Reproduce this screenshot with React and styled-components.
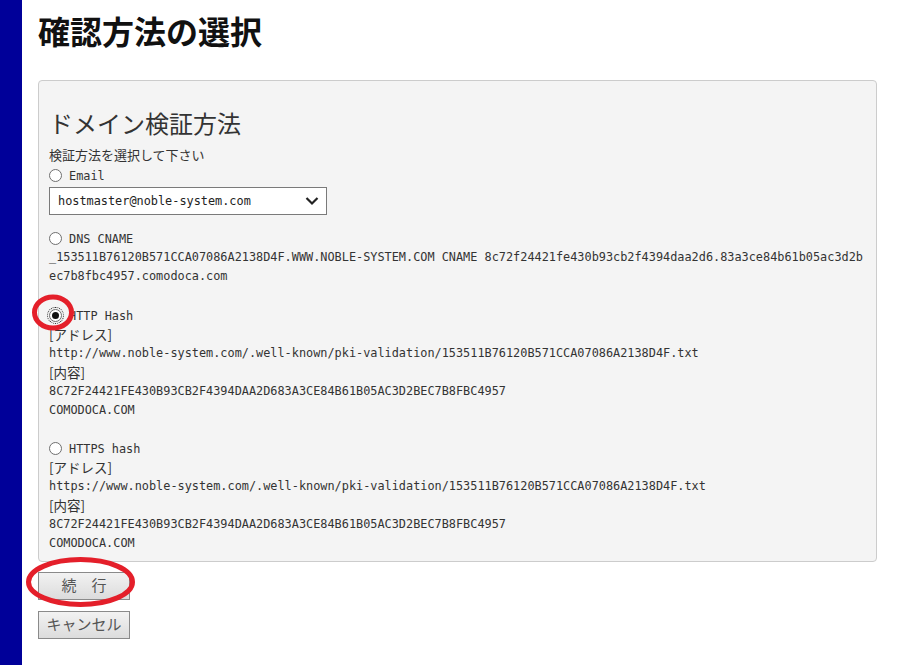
import React from "react";
import styled, { createGlobalStyle } from "styled-components";

const Global = createGlobalStyle`
  html, body { margin: 0; padding: 0; background: #fff; }
  body { font-family: "Noto Sans CJK JP", "Noto Sans", sans-serif; color: #333; }
`;

const Page = styled.div`
  position: relative;
  display: flex;
  min-height: 665px;
  width: 900px;
`;

const SideBar = styled.div`
  width: 22px;
  background: #000099;
  flex: none;
`;

const Main = styled.main`
  flex: 1;
  padding: 0 23px 20px 16px;
`;

const Title = styled.h1`
  margin: 10px 0 0;
  font-size: 32px;
  line-height: 40px;
  font-weight: 700;
  color: #111;
  font-family: "Noto Sans CJK JP", sans-serif;
`;

const Panel = styled.section`
  margin-top: 30px;
  background: #f4f4f4;
  border: 1px solid #cccccc;
  border-radius: 4px;
  padding: 16px 10px 8px;
`;

const Heading = styled.h2`
  margin: 10px 0 6px;
  font-size: 24px;
  line-height: 32px;
  font-weight: 400;
  color: #333;
  font-family: "Noto Sans CJK JP", sans-serif;
`;

const Lead = styled.div`
  font-size: 13px;
  line-height: 19px;
  color: #333;
`;

const Group = styled.div`
  margin-top: ${(p) => p.$gap || 0}px;
`;

const Mono = styled.div`
  font-family: "DejaVu Sans Mono", "Noto Sans CJK JP", monospace;
  font-size: 11.86px;
  line-height: 19px;
  height: 19px;
  color: #333;
  word-break: break-all;
`;

const MonoBlock = styled(Mono)`
  height: auto;
`;

const Jp = styled.span`
  font-family: "Noto Sans CJK JP", sans-serif;
  font-size: 13.5px;
  font-weight: 400;
  color: #333;
  line-height: 19px;
`;

const RadioRow = styled.label`
  display: flex;
  align-items: center;
  gap: 7px;
  height: 19px;
  margin-top: ${(p) => p.$top || 0}px;
  font-family: "DejaVu Sans Mono", monospace;
  font-size: 11.86px;
  color: #333;
`;

const Radio = styled.span`
  box-sizing: border-box;
  width: 13px;
  height: 13px;
  border-radius: 50%;
  border: 1px solid #6f6f6f;
  background: #fff;
  position: relative;
  flex: none;
  outline: ${(p) => (p.$checked ? "1px dotted #222" : "none")};
  outline-offset: 1px;
  &::after {
    content: "";
    display: ${(p) => (p.$checked ? "block" : "none")};
    position: absolute;
    left: 2px;
    top: 2px;
    width: 7px;
    height: 7px;
    border-radius: 50%;
    background: #111;
  }
`;

const Select = styled.div`
  box-sizing: border-box;
  margin-top: 2px;
  width: 278px;
  height: 28px;
  border: 1px solid #7a7a7a;
  background: #fff;
  display: flex;
  align-items: center;
  justify-content: space-between;
  padding: 0 7px 0 8px;
  font-family: "DejaVu Sans Mono", monospace;
  font-size: 11.86px;
  color: #222;
`;

const Buttons = styled.div`
  display: flex;
  flex-direction: column;
  align-items: flex-start;
  gap: 11px;
  margin-top: 10px;
`;

const Button = styled.button`
  box-sizing: border-box;
  width: ${(p) => p.$w}px;
  height: 28px;
  border: 1px solid #8a8a8a;
  background: linear-gradient(#f2f2f2, #dcdcdc);
  font-family: "Noto Sans CJK JP", sans-serif;
  font-size: 15px;
  line-height: 24px;
  color: #555;
  padding: 0 0 2px;
  white-space: pre;
`;

const Overlay = styled.svg`
  position: absolute;
  left: 0;
  top: 0;
  pointer-events: none;
`;

export default function App() {
  return (
    <>
      <Global />
      <Page>
        <SideBar />
        <Main>
          <Title>確認方法の選択</Title>
          <Panel>
            <Heading>ドメイン検証方法</Heading>
            <Lead>検証方法を選択して下さい</Lead>
            <RadioRow $top={2}>
              <Radio />
              Email
            </RadioRow>
            <Select>
              <span>hostmaster@noble-system.com</span>
              <svg width="14" height="10" viewBox="0 0 14 10">
                <path d="M1.5 2 L7 7.5 L12.5 2" fill="none" stroke="#222" strokeWidth="2.2" />
              </svg>
            </Select>

            <Group $gap={14}>
              <RadioRow>
                <Radio />
                DNS CNAME
              </RadioRow>
              <MonoBlock>
                _153511B76120B571CCA07086A2138D4F.WWW.NOBLE-SYSTEM.COM CNAME 8c72f24421fe430b93cb2f4394daa2d6.83a3ce84b61b05ac3d2bec7b8fbc4957.comodoca.com
              </MonoBlock>
            </Group>

            <Group $gap={20}>
              <RadioRow>
                <Radio $checked />
                HTTP Hash
              </RadioRow>
              <Mono><Jp>[アドレス]</Jp></Mono>
              <Mono>http://www.noble-system.com/.well-known/pki-validation/153511B76120B571CCA07086A2138D4F.txt</Mono>
              <Mono><Jp>[内容]</Jp></Mono>
              <Mono>8C72F24421FE430B93CB2F4394DAA2D683A3CE84B61B05AC3D2BEC7B8FBC4957</Mono>
              <Mono>COMODOCA.COM</Mono>
            </Group>

            <Group $gap={19}>
              <RadioRow>
                <Radio />
                HTTPS hash
              </RadioRow>
              <Mono><Jp>[アドレス]</Jp></Mono>
              <Mono>https://www.noble-system.com/.well-known/pki-validation/153511B76120B571CCA07086A2138D4F.txt</Mono>
              <Mono><Jp>[内容]</Jp></Mono>
              <Mono>8C72F24421FE430B93CB2F4394DAA2D683A3CE84B61B05AC3D2BEC7B8FBC4957</Mono>
              <Mono>COMODOCA.COM</Mono>
            </Group>
          </Panel>
          <Buttons>
            <Button $w={92}>続　行</Button>
            <Button $w={92}>キャンセル</Button>
          </Buttons>
        </Main>
        <Overlay width="900" height="665" viewBox="0 0 900 665">
          <ellipse cx="53" cy="312.5" rx="18.5" ry="15.5" fill="none" stroke="#e41f2a" strokeWidth="5" />
          <ellipse cx="80.5" cy="582" rx="52" ry="22.5" fill="none" stroke="#e41f2a" strokeWidth="5" />
        </Overlay>
      </Page>
    </>
  );
}
